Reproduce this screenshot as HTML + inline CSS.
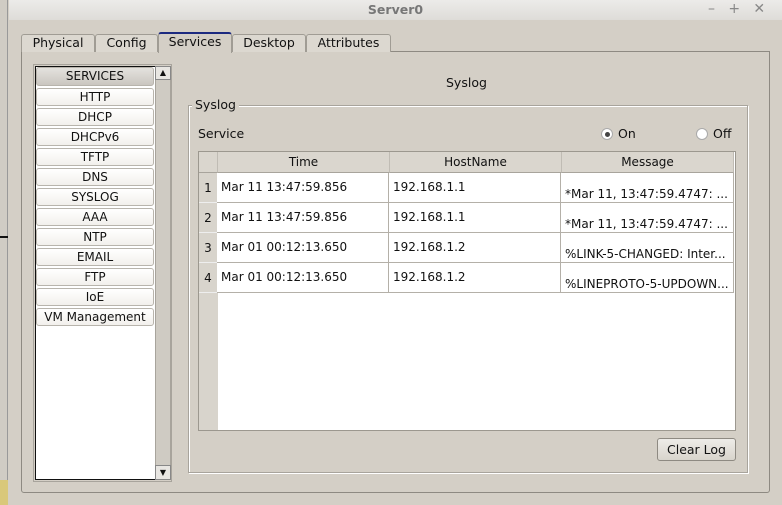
<!DOCTYPE html><html><head><style>
*{margin:0;padding:0;box-sizing:border-box}
body{width:782px;height:505px;background:#d4cfc6;font-family:"DejaVu Sans","Liberation Sans",sans-serif;font-size:12px;color:#111;position:relative;overflow:hidden}
.a{position:absolute}
.tab{position:absolute;top:34px;height:18px;border:1px solid #a09c94;border-bottom:none;background:#dcd8d0;text-align:center;line-height:16px;font-size:12.5px;border-radius:3px 3px 0 0}
.btn{position:absolute;left:36px;width:118px;height:18px;background:linear-gradient(#fff,#f2f0ec);border:1px solid #b8b4ac;border-radius:3px;text-align:center;line-height:17px;font-size:12px}
.cell{position:absolute;background:#fff;border-right:1px solid #b4b0a8;border-bottom:1px solid #b4b0a8;font-size:12px;padding-left:4px;white-space:nowrap;overflow:hidden;height:30px}
.hd{position:absolute;top:152px;height:21px;background:#dad6ce;border-right:1px solid #c0bcb4;text-align:center;line-height:20px;border-bottom:1px solid #a8a49c}
.rn{position:absolute;left:199px;width:18px;height:30px;background:#d8d4cc;line-height:31px;text-align:center;border-bottom:1px solid #eee}
</style></head><body>
<div class="a" style="left:0;top:0;width:8px;height:505px;background:#d0ccc4;border-right:1px solid #999"></div>
<div class="a" style="left:0;top:236px;width:8px;height:2px;background:#111"></div>
<div class="a" style="left:0;top:480px;width:8px;height:25px;background:#d9c87a"></div>
<div class="a" style="left:9px;top:0;width:773px;height:20px;background:linear-gradient(#ecebe9,#dedcd8);text-align:center;line-height:20px;font-weight:bold;color:#777;font-size:12.5px">Server0</div>
<div class="a" style="left:708px;top:1px;color:#888;font-size:14px">–&nbsp;&nbsp;&nbsp;+&nbsp;&nbsp;&nbsp;✕</div>
<div class="a" style="left:21px;top:51px;width:749px;height:442px;border:1px solid #8e8a82;border-radius:0 0 3px 3px"></div>
<div class="tab" style="left:21px;width:74px">Physical</div>
<div class="tab" style="left:95px;width:63px">Config</div>
<div class="tab" style="left:158px;width:74px;top:32px;border-top:2px solid #1c2a80;background:#d4cfc6;height:21px">Services</div>
<div class="tab" style="left:232px;width:74px">Desktop</div>
<div class="tab" style="left:306px;width:85px">Attributes</div>
<div class="a" style="left:33px;top:64px;width:139px;height:418px;border:1px solid #a8a49c"></div>
<div class="a" style="left:35px;top:66px;width:121px;height:414px;background:#fff;border:1px solid #111"></div>
<div class="a" style="left:155px;top:66px;width:16px;height:414px;background:#cfcbc3;border:1px solid #a8a49c"></div>
<div class="a" style="left:155px;top:66px;width:16px;height:14px;background:#e8e6e2;border:1px solid #888;font-size:8px;text-align:center;line-height:12px">▲</div>
<div class="a" style="left:155px;top:465px;width:16px;height:15px;background:#e8e6e2;border:1px solid #888;font-size:8px;text-align:center;line-height:13px">▼</div>
<div class="btn" style="top:67px;height:19px;background:linear-gradient(#e4e2de,#cac6c0)">SERVICES</div>
<div class="btn" style="top:88px">HTTP</div>
<div class="btn" style="top:108px">DHCP</div>
<div class="btn" style="top:128px">DHCPv6</div>
<div class="btn" style="top:148px">TFTP</div>
<div class="btn" style="top:168px">DNS</div>
<div class="btn" style="top:188px">SYSLOG</div>
<div class="btn" style="top:208px">AAA</div>
<div class="btn" style="top:228px">NTP</div>
<div class="btn" style="top:248px">EMAIL</div>
<div class="btn" style="top:268px">FTP</div>
<div class="btn" style="top:288px">IoE</div>
<div class="btn" style="top:308px">VM Management</div>
<div class="a" style="left:446px;top:75px;font-size:12.5px">Syslog</div>
<div class="a" style="left:188px;top:105px;width:560px;height:368px;border:1px solid #a8a49c;box-shadow:1px 1px 0 #fff inset,1px 1px 0 #fff"></div>
<div class="a" style="left:192px;top:97px;background:#d4cfc6;padding:0 3px;font-size:12.5px">Syslog</div>
<div class="a" style="left:198px;top:126px;font-size:12.5px">Service</div>
<div class="a" style="left:601px;top:128px;width:12px;height:12px;border-radius:50%;background:#fff;border:1px solid #aaa"><div class="a" style="left:3px;top:3px;width:5px;height:5px;border-radius:50%;background:#444"></div></div>
<div class="a" style="left:618px;top:126px;font-size:12.5px">On</div>
<div class="a" style="left:696px;top:128px;width:12px;height:12px;border-radius:50%;background:#fff;border:1px solid #aaa"></div>
<div class="a" style="left:713px;top:126px;font-size:12.5px">Off</div>
<div class="a" style="left:198px;top:151px;width:538px;height:280px;background:#fff;border:1px solid #9c988f"></div>
<div class="a" style="left:199px;top:152px;width:19px;height:278px;background:#d8d4cc"></div>
<div class="hd" style="left:199px;width:19px"></div>
<div class="hd" style="left:218px;width:172px">Time</div>
<div class="hd" style="left:390px;width:172px">HostName</div>
<div class="hd" style="left:562px;width:172px">Message</div>
<div class="rn" style="top:173px">1</div><div class="rn" style="top:203px">2</div><div class="rn" style="top:233px">3</div><div class="rn" style="top:263px">4</div>
<div class="cell" style="left:217px;top:173px;width:172px;padding-top:7px">Mar 11 13:47:59.856</div>
<div class="cell" style="left:389px;top:173px;width:172px;padding-top:7px">192.168.1.1</div>
<div class="cell" style="left:561px;top:173px;width:173px;padding-top:14px">*Mar 11, 13:47:59.4747: ...</div>
<div class="cell" style="left:217px;top:203px;width:172px;padding-top:7px">Mar 11 13:47:59.856</div>
<div class="cell" style="left:389px;top:203px;width:172px;padding-top:7px">192.168.1.1</div>
<div class="cell" style="left:561px;top:203px;width:173px;padding-top:14px">*Mar 11, 13:47:59.4747: ...</div>
<div class="cell" style="left:217px;top:233px;width:172px;padding-top:7px">Mar 01 00:12:13.650</div>
<div class="cell" style="left:389px;top:233px;width:172px;padding-top:7px">192.168.1.2</div>
<div class="cell" style="left:561px;top:233px;width:173px;padding-top:14px">%LINK-5-CHANGED: Inter...</div>
<div class="cell" style="left:217px;top:263px;width:172px;padding-top:7px">Mar 01 00:12:13.650</div>
<div class="cell" style="left:389px;top:263px;width:172px;padding-top:7px">192.168.1.2</div>
<div class="cell" style="left:561px;top:263px;width:173px;padding-top:14px">%LINEPROTO-5-UPDOWN...</div>
<div class="a" style="left:657px;top:438px;width:79px;height:23px;border:1px solid #8e8a82;border-radius:3px;background:linear-gradient(#eeece8,#d8d4cc);text-align:center;line-height:21px;font-size:12.5px">Clear Log</div>
</body></html>
